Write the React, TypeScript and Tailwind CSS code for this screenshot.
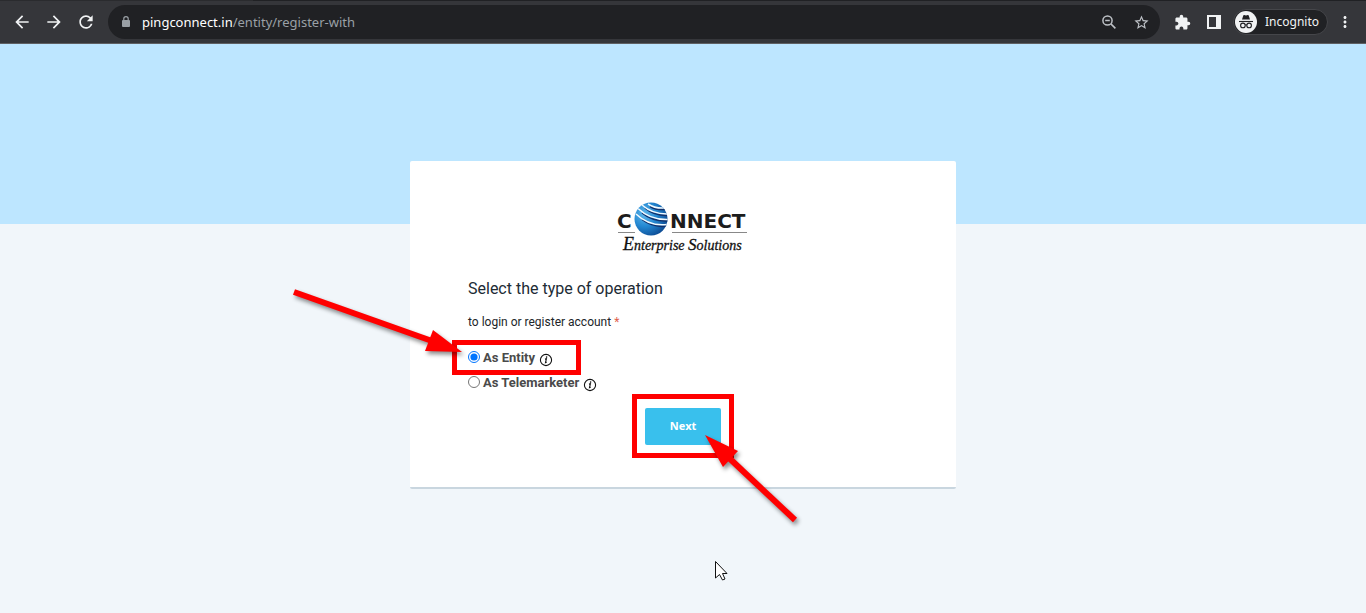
import { useState } from "react";
import { MdArrowBack, MdArrowForward, MdExtension, MdMoreVert, MdRefresh, MdStarBorder } from "react-icons/md";

const operations = [
  { id: "entity", label: "As Entity", marked: true },
  { id: "telemarketer", label: "As Telemarketer", marked: false },
];

function IncognitoIcon() {
  return (
    <svg width="22" height="22" viewBox="0 0 22 22" aria-hidden="true">
      <circle cx="11" cy="11" r="11" fill="#f1f3f4" />
      <path d="M7 8.6 8.3 4.4Q8.6 3.9 9.2 4.1L11 4.6 12.8 4.1Q13.4 3.9 13.7 4.4L15 8.6Z" fill="#202124" />
      <path d="M4 10.5H18" stroke="#202124" strokeWidth="1.1" />
      <g fill="none" stroke="#202124" strokeWidth="1.1">
        <circle cx="7.9" cy="14.4" r="2.3" />
        <circle cx="14.1" cy="14.4" r="2.3" />
        <path d="M10.1 14.1Q11 13.4 11.9 14.1" />
      </g>
    </svg>
  );
}

function BrowserBar() {
  return (
    <header className="bg-[#35363a] text-[#f1f3f4]" style={{ fontFamily: '"Noto Sans", sans-serif' }}>
      <div className="flex h-px">
        <div className="w-[253px] bg-[#2a2b2e]" />
        <div className="flex-1 bg-[#202124]" />
      </div>
      <div className="flex h-[43px] items-center border-b border-[#5f6063] px-3">
        <button type="button" aria-label="Back" className="mr-3"><MdArrowBack size={20} /></button>
        <button type="button" aria-label="Forward" className="mr-3"><MdArrowForward size={20} /></button>
        <button type="button" aria-label="Reload" className="mr-3"><MdRefresh size={20} /></button>
        <div className="flex h-[34px] flex-1 items-center rounded-full bg-[#202124] pl-3 pr-2.5">
          <svg width="12" height="14" viewBox="0 0 12 14" className="mr-2.5" aria-hidden="true">
            <rect x="2" y="5" width="8" height="7" rx="1" fill="#9aa0a6" />
            <path d="M3.8 5.5V3.8A2.2 2.2 0 0 1 8.2 3.8V5.5" fill="none" stroke="#9aa0a6" strokeWidth="1.2" />
          </svg>
          <a href="#" className="flex-1 text-[13px] leading-5 text-[#9aa0a6]">
            <span className="text-white">pingconnect.in</span>/entity/register-with
          </a>
          <button type="button" aria-label="Zoom" className="mr-4 text-[#bdc1c6]">
            <svg width="16" height="16" viewBox="0 0 16 16" fill="none" stroke="currentColor" strokeWidth="1.5">
              <circle cx="6.5" cy="6.5" r="4.6" />
              <path d="M4.2 6.5H8.8M9.9 9.9 14.4 14.4" />
            </svg>
          </button>
          <button type="button" aria-label="Bookmark" className="text-[#bdc1c6]"><MdStarBorder size={17} /></button>
        </div>
        <button type="button" aria-label="Extensions" className="ml-3.5 mr-4"><MdExtension size={17} /></button>
        <button type="button" aria-label="Side panel" className="mr-3">
          <svg width="14" height="14" viewBox="0 0 14 14">
            <path d="M0 0H14V14H0ZM2 2V12H9V2Z" fill="#f1f3f4" fillRule="evenodd" />
          </svg>
        </button>
        <div className="flex h-[26px] items-center rounded-full border border-[#45464a] bg-[#202124] pl-px pr-2 text-xs">
          <IncognitoIcon />
          <span className="ml-2">Incognito</span>
        </div>
        <button type="button" aria-label="Menu" className="ml-2"><MdMoreVert size={18} /></button>
      </div>
    </header>
  );
}

function Logo() {
  return (
    <svg width="132" height="55" viewBox="0 0 132 55" role="img" aria-label="Connect Enterprise Solutions" className="mx-auto">
      <defs>
        <radialGradient id="globe" cx="0.3" cy="0.35" r="0.75">
          <stop offset="0" stopColor="#5fb8ec" />
          <stop offset="0.5" stopColor="#2488d2" />
          <stop offset="1" stopColor="#0c4a92" />
        </radialGradient>
        <clipPath id="globeClip"><circle cx="34" cy="18" r="16.5" /></clipPath>
      </defs>
      <g fontFamily='"DejaVu Sans", sans-serif' fontWeight="700" fontSize="20" fill="#1c1c1c">
        <text x="0" y="27">C</text>
        <text x="53" y="27">NNECT</text>
      </g>
      <circle cx="34" cy="18" r="16.5" fill="url(#globe)" />
      <g clipPath="url(#globeClip)" fill="none">
        <g stroke="#12306a" strokeWidth="1.5">
          <path d="M33 5.5Q39 9 48 8.5" />
          <path d="M28 7Q36 14.5 50 14.5" />
          <path d="M25 12Q35 20.5 51 20" />
          <path d="M25 18.5Q36 27 50 25" />
        </g>
        <g stroke="#f2faff" strokeWidth="1.5">
          <path d="M31 3Q38 7.5 47 7" />
          <path d="M25 4Q35 13 50 13" />
          <path d="M21 7.5Q33 19 51 18.5" />
          <path d="M19 13Q32 25.5 50 23.5" />
        </g>
      </g>
      <path d="M1 31.5H18M55 31.5H130" stroke="#888" />
      <g fontFamily='"Liberation Serif", serif' fontStyle="italic" fontSize="14" fill="#111" stroke="#111" strokeWidth="0.3">
        <text x="6" y="49"><tspan fontSize="18">E</tspan>nterprise <tspan fontSize="17">S</tspan>olutions</text>
      </g>
    </svg>
  );
}

function InfoIcon() {
  return (
    <svg width="14" height="14" viewBox="0 0 14 14" role="img" aria-label="Info" className="ml-1 mt-1">
      <circle cx="7" cy="7" r="5.6" fill="none" stroke="#111" strokeWidth="1.1" />
      <path d="M6 6.1 7.4 5.8 6.5 9.6 7.7 9.2" fill="none" stroke="#111" strokeWidth="1.1" />
      <circle cx="7.6" cy="4.1" r="0.8" fill="#111" />
    </svg>
  );
}

// arrows and pointer drawn over the card, measured from its top left corner
function Annotations() {
  return (
    <svg width="546" height="327" viewBox="0 0 546 327" aria-hidden="true" className="pointer-events-none absolute left-0 top-0 overflow-visible [&>g]:drop-shadow-[2px_3px_2px_rgba(0,0,0,0.45)]">
      <g fill="#f00" stroke="#f00">
        <path d="M-116 131 22 180" strokeWidth="6" />
        <path d="M52 191 23 169 15 190Z" stroke="none" />
      </g>
      <g fill="#f00" stroke="#f00">
        <path d="M385 359 318 296" strokeWidth="6" />
        <path d="M295 274 328 290 313 306Z" stroke="none" />
      </g>
      <path d="M305.5 400.5V417L309.5 413.5 312.5 419 315 418 312.5 412.5H317Z" fill="#fff" stroke="#111" strokeWidth="1" />
    </svg>
  );
}

export default function App() {
  const [selected, setSelected] = useState("entity");

  return (
    <div className="min-h-screen bg-[#f1f6fa]" style={{ fontFamily: "Roboto, sans-serif" }}>
      <BrowserBar />
      <div className="h-[180px] bg-[#bde6ff]" />
      <main className="relative mx-auto -mt-[63px] w-full max-w-[546px] rounded-xs border-b-2 border-[#c9d6df] bg-white px-[58px] pb-[42px] pt-10">
        <Logo />
        <form onSubmit={(e) => e.preventDefault()}>
          <h1 className="mt-[21px] text-base leading-6 text-[#212b35]">Select the type of operation</h1>
          <p className="mt-[13px] text-xs leading-4 text-[#212529]">
            to login or register account <span className="text-[#e0604c]">*</span>
          </p>
          <div className="mt-[15px]">
            {operations.map((op) => (
              <div key={op.id} className="relative flex h-[25px] items-center">
                <input
                  type="radio"
                  id={op.id}
                  name="operation"
                  className="mb-0.5 mr-[3px] size-3"
                  checked={selected === op.id}
                  onChange={() => setSelected(op.id)}
                />
                <label htmlFor={op.id} className="text-[13px] font-bold leading-5 text-[#4a4a4a]">{op.label}</label>
                <InfoIcon />
                {op.marked && <div className="pointer-events-none absolute -left-4 -top-[5px] h-[35px] w-[129px] border-[5px] border-[#f00]" />}
              </div>
            ))}
          </div>
          <div className="relative mx-auto mt-[13px] w-[76px]">
            <button type="submit" className="h-[37px] w-full rounded-xs bg-[#39c0ed] text-[11px] font-bold text-white" style={{ fontFamily: '"Open Sans", sans-serif' }}>
              Next
            </button>
            <div className="pointer-events-none absolute -left-[13px] -top-3.5 h-16 w-[102px] border-[5px] border-[#f00]" />
          </div>
        </form>
        <Annotations />
      </main>
    </div>
  );
}
